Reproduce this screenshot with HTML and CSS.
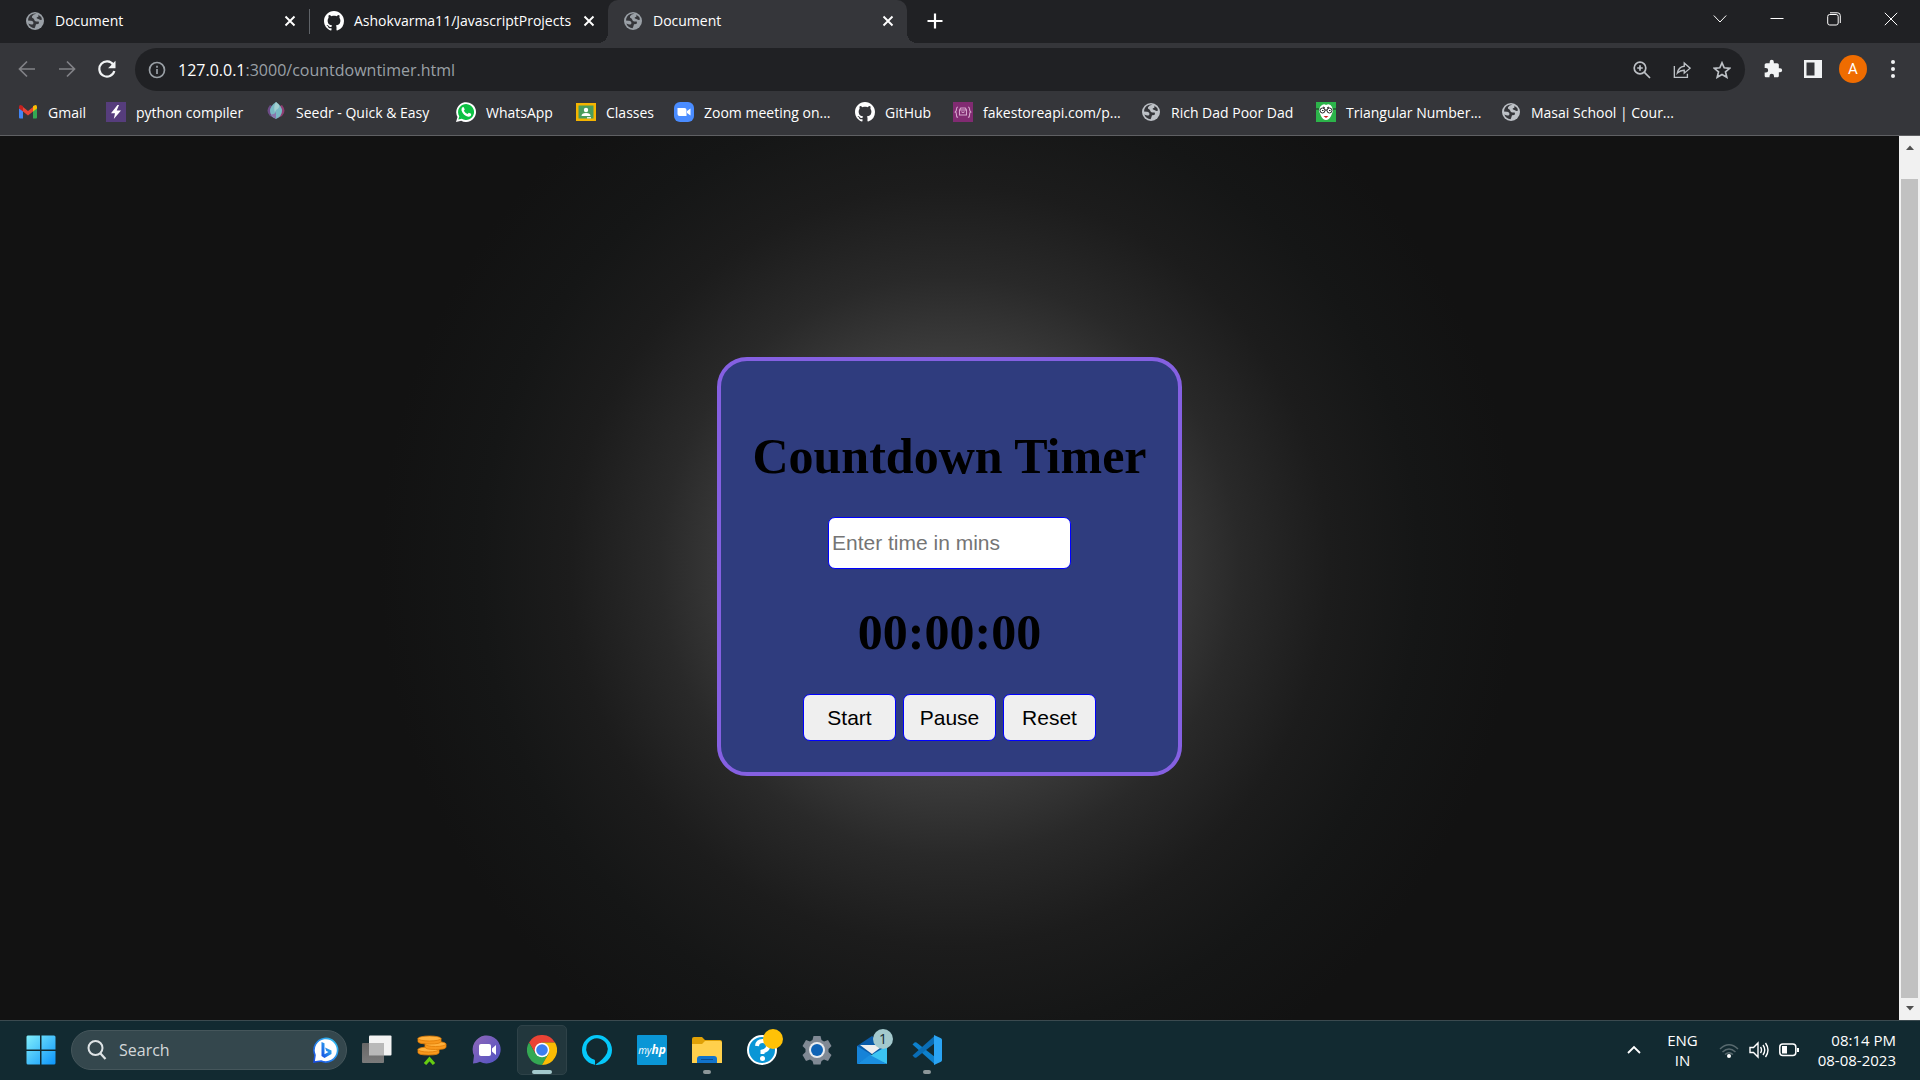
FILE: index.html
```html
<!DOCTYPE html>
<html lang="en">
<head>
<meta charset="utf-8">
<title>Document</title>
<link rel="stylesheet" href="styles.css">
</head>
<body>
<svg class="sprite" aria-hidden="true">
  <symbol id="globe" viewBox="0 0 20 20"><circle cx="10" cy="10" r="9" fill="currentColor"/><path fill="#35363a" d="M11.500 2.800q-3.500.2-4.500 2.400-.5 2 1.500 2.300l.8 1.300q.2 1.700 2 1.700h2.400q.8 1.800-.4 2.500l-2.300.3q-.6 2.500-1.500 4-4.500-.5-6.200-4.800 2.500 1.200 4.200.9 1.500-.6.800-2.200-1-1.600-2.800-1.400L3 9.500Q3.200 4.800 7.500 3q2-.8 4-.2zM13 3.500q3.200 1.500 4 5-1.500 1-3-.2-1.500-.3-2.500-1.300.2-1 1.800-1.200.6-1.300-.3-2.300z"/></symbol>
  <symbol id="github" viewBox="0 0 16 16"><path fill="#fff" d="M8 0C3.580 0 0 3.580 0 8c0 3.540 2.290 6.530 5.470 7.590.4.070.55-.17.55-.38 0-.19-.01-.82-.01-1.490-2.010.37-2.530-.49-2.690-.94-.09-.23-.48-.94-.82-1.130-.28-.15-.68-.52-.01-.53.63-.01 1.080.58 1.230.82.72 1.210 1.870.87 2.330.66.070-.52.28-.87.51-1.070-1.780-.2-3.640-.89-3.640-3.950 0-.87.31-1.590.82-2.150-.08-.2-.36-1.020.08-2.120 0 0 .67-.21 2.200.82.64-.18 1.320-.27 2-.27s1.360.09 2 .27c1.530-1.040 2.200-.82 2.200-.82.44 1.100.16 1.920.08 2.120.51.56.82 1.270.82 2.150 0 3.070-1.870 3.750-3.650 3.950.29.25.54.73.54 1.480 0 1.070-.01 1.930-.01 2.200 0 .21.15.46.55.38A8.010 8.010 0 0 0 16 8c0-4.420-3.580-8-8-8z"/></symbol>
  <symbol id="cross" viewBox="0 0 12 12"><path d="M1.500 1.500l9 9M10.500 1.500l-9 9" stroke="currentColor" stroke-width="1.900" fill="none"/></symbol>
</svg>

<header class="browser">
  <div class="tabstrip">
    <div class="tab">
      <svg class="favicon muted"><use href="#globe"/></svg><span class="tab-title">Document</span>
      <button class="tab-close" aria-label="Close tab"><svg><use href="#cross"/></svg></button>
    </div>
    <div class="tab tab-divided">
      <svg class="favicon"><use href="#github"/></svg><span class="tab-title">Ashokvarma11/JavascriptProjects</span>
      <button class="tab-close" aria-label="Close tab"><svg><use href="#cross"/></svg></button>
    </div>
    <div class="tab tab-active">
      <svg class="favicon muted"><use href="#globe"/></svg><span class="tab-title">Document</span>
      <button class="tab-close" aria-label="Close tab"><svg><use href="#cross"/></svg></button>
    </div>
    <button class="new-tab" aria-label="New tab"><svg viewBox="0 0 16 16"><path d="M8 .5v15M.5 8h15" stroke="#fff" stroke-width="2.200"/></svg></button>
    <div class="window-controls">
      <button aria-label="Search tabs"><svg viewBox="0 0 14 14"><path d="M.8 3.500L7 10l6.200-6.500" class="hair"/></svg></button>
      <button aria-label="Minimize"><svg viewBox="0 0 14 14"><path d="M.5 6.500h13" class="hair"/></svg></button>
      <button aria-label="Restore"><svg viewBox="0 0 14 14"><rect x=".7" y="2.500" width="10.500" height="10.500" rx="2" class="hair"/><path d="M3 .8h7.500q2.800 0 2.800 2.800V11" class="hair"/></svg></button>
      <button aria-label="Close"><svg viewBox="0 0 14 14"><path d="M.8.8l12.400 12.400M13.200.8L.8 13.200" class="hair"/></svg></button>
    </div>
  </div>

  <div class="toolbar">
    <button class="nav dim" aria-label="Back"><svg viewBox="0 0 18 18"><path d="M17 9H2M9 1.500L1.500 9 9 16.500" class="line"/></svg></button>
    <button class="nav dim" aria-label="Forward"><svg viewBox="0 0 18 18"><path d="M1 9h15M9 1.500L16.500 9 9 16.500" class="line"/></svg></button>
    <button class="nav" aria-label="Reload"><svg viewBox="0 0 18 18"><path d="M15.300 4.800A7.600 7.600 0 1 0 16.300 11" fill="none" stroke="#f1f3f4" stroke-width="2.200"/><path d="M17.500.8v7.400h-7.400z" fill="#f1f3f4"/></svg></button>
    <div class="omnibox">
      <svg class="info" viewBox="0 0 18 18"><circle cx="9" cy="9" r="7.500" class="line"/><path d="M9 8v5M9 4.800v2" class="line"/></svg>
      <label class="url" for="address"><span class="host">127.0.0.1</span>:3000/countdowntimer.html</label>
      <input id="address" class="address" type="text" aria-label="Address">
      <button aria-label="Zoom"><svg viewBox="0 0 18 18"><circle cx="7" cy="7" r="5.800" class="line"/><path d="M11.200 11.200l5.800 5.800M7 4.200v5.600M4.200 7h5.600" class="line"/></svg></button>
      <button aria-label="Share"><svg viewBox="0 0 20 18"><path d="M1.500 4.500v12.700h14.500v-4M12.500 1.200L19 7l-6.500 5.500V9.300Q8 9.200 4.800 12.500 6 5.500 12.500 4.800z" fill="none" stroke="currentColor" stroke-width="1.500"/></svg></button>
      <button aria-label="Bookmark"><svg viewBox="0 0 18 18"><path d="M9 1.800l2.200 5 5.500.5-4.200 3.600 1.300 5.400L9 13.500l-4.800 2.800 1.300-5.400L1.300 7.300l5.500-.5z" class="line"/></svg></button>
    </div>
    <button class="action" aria-label="Extensions"><svg viewBox="0 0 24 24"><path fill="#f1f3f4" d="M20.500 11H19V7c0-1.100-.9-2-2-2h-4V3.500a2.500 2.500 0 0 0-5 0V5H4c-1.100 0-2 .9-2 2v3.800h1.500a2.700 2.700 0 0 1 0 5.400H2V20c0 1.100.9 2 2 2h3.800v-1.500a2.700 2.700 0 0 1 5.400 0V22H17c1.100 0 2-.9 2-2v-4h1.500a2.500 2.500 0 0 0 0-5z"/></svg></button>
    <button class="action" aria-label="Side panel"><svg viewBox="0 0 20 20"><path fill="#f1f3f4" fill-rule="evenodd" d="M1 1h18v18H1zM3.500 3.500v13h8v-13z"/></svg></button>
    <button class="action" aria-label="Profile"><span class="avatar">A</span></button>
    <button class="action" aria-label="Menu"><svg viewBox="0 0 20 20"><g fill="#f1f3f4"><circle cx="10" cy="3" r="2"/><circle cx="10" cy="10" r="2"/><circle cx="10" cy="17" r="2"/></g></svg></button>
  </div>

  <nav class="bookmarks" aria-label="Bookmarks">
    <a href="#"><svg viewBox="0 0 20 20"><path fill="#4285f4" d="M1 6v9.500q0 1 1 1h3V8.500z"/><path fill="#34a853" d="M19 6v9.500q0 1-1 1h-3V8.500z"/><path fill="#ea4335" d="M5 5l5 4 5-4v4.500l-5 4-5-4z"/><path fill="#c5221f" d="M1 5q0-3 3-1.500L5 4.300v5.200L1 6.500z"/><path fill="#fbbc04" d="M19 5q0-3-3-1.500l-1 .8v5.200l4-3z"/></svg>Gmail</a>
    <a href="#"><svg viewBox="0 0 20 20"><path fill="#563d7c" d="M0 0h20v20H0z"/><path fill="#fff" d="M11.500 3L5 11.200h4L7.800 17 15 8.500h-4.300L13 3z"/></svg>python compiler</a>
    <a href="#"><svg viewBox="0 0 20 20"><path fill="#6c4b86" d="M4 3q-5 6 0 11 3 2 6 2V6z"/><path fill="#8f3d72" d="M16 3q5 6 0 11-3 2-6 2V6z"/><path fill="#79b9c4" d="M10 0Q4 4 4 9t6 8q6-3 6-8t-6-9z"/><path fill="#a2cfd0" d="M10 0Q7 5 9 11l1-3q4-2 3-5z"/><path fill="#8a77ae" d="M5 12q4 1 5-3v8q-4-2-5-5z"/></svg>Seedr - Quick &amp; Easy</a>
    <a href="#"><svg viewBox="0 0 20 20"><path fill="#fff" d="M0 20l1.500-5A9.900 9.900 0 1 1 5.200 18.700z"/><path fill="#0cc143" d="M2.300 17.600l1-3.300a8 8 0 1 1 2.500 2.500z"/><path fill="#fff" d="M6.200 5.500q1-1 1.700 0l.8 1.900q0 .5-.9 1.300 1.500 2.600 3.800 3.300l1.200-1.300 2.300 1.100q.5 3-2.800 3Q7.500 14 5.500 8.500q-.2-2 .7-3z"/></svg>WhatsApp</a>
    <a href="#"><svg viewBox="0 0 20 20"><path fill="#f4b400" d="M0 1h20v18H0z"/><path fill="#4a9c5c" d="M2.500 3.500h15v13h-15z"/><circle cx="10" cy="8" r="2.200" fill="#fff"/><path fill="#fff" d="M5.500 14q0-3 4.500-3t4.500 3z"/><path fill="#dcebdc" d="M11 15h4v1.500h-4z"/></svg>Classes</a>
    <a href="#"><svg viewBox="0 0 20 20"><rect width="20" height="20" rx="6" fill="#4a8cff"/><path fill="#fff" d="M3.500 6h7q2 0 2 2v6h-7q-2 0-2-2zM13 9l3.500-2.500v7L13 11z"/></svg>Zoom meeting on...</a>
    <a href="#"><svg><use href="#github"/></svg>GitHub</a>
    <a href="#"><svg viewBox="0 0 20 20"><path fill="#812b72" d="M0 0h20v20H0z"/><path fill="none" stroke="#d6a6cd" stroke-width="1.100" d="M5 5q-1.500 0-1.500 2T2.300 10q1.200.3 1.200 3T5 15M15 5q1.500 0 1.500 2t1.200 3q-1.200.3-1.200 3T15 15M6.500 8l1.200-2h4.600l1.200 2v5h-7zM6.500 8h7M8.500 9.500q1.500 2 3 0"/></svg>fakestoreapi.com/p...</a>
    <a href="#"><svg class="pale"><use href="#globe"/></svg>Rich Dad Poor Dad</a>
    <a href="#"><svg viewBox="0 0 20 20"><path fill="#2cb44a" d="M0 0h20v20H0z"/><path fill="#fff" d="M4 5q3-4 6-2 4-2 6 2l1 4-2 5q-2 4-5 4t-5-4L3 9z"/><path d="M0 7h3M17 7h3M9 8h2" stroke="#222"/><circle cx="6.500" cy="8.500" r="2.500" fill="#fff" stroke="#222"/><circle cx="13.500" cy="8.500" r="2.500" fill="#fff" stroke="#222"/><path d="M6 8.500h1.500M13 8.500h1.500M7 5l2 1M11 6l2-1" stroke="#222"/><path fill="#c22" d="M7.500 14h5l-2.500 2z"/></svg>Triangular Number...</a>
    <a href="#"><svg class="pale"><use href="#globe"/></svg>Masai School | Cour...</a>
  </nav>
</header>

<div class="viewport">
  <main class="page">
    <section class="timer">
      <h1>Countdown Timer</h1>
      <input class="minutes" type="text" placeholder="Enter time in mins" aria-label="Time in minutes">
      <p class="time">00:00:00</p>
      <div class="controls">
        <button>Start</button>
        <button>Pause</button>
        <button>Reset</button>
      </div>
    </section>
  </main>
  <div class="scrollbar" aria-hidden="true">
    <svg viewBox="0 0 10 6"><path d="M5 .5L10 6H0z" fill="#505050"/></svg>
    <div class="thumb"></div>
    <svg viewBox="0 0 10 6"><path d="M5 5.500L10 0H0z" fill="#505050"/></svg>
  </div>
</div>

<footer class="taskbar">
  <button class="task" aria-label="Start"><svg viewBox="0 0 30 30"><defs><linearGradient id="win" x1="0" y1="0" x2="30" y2="30" gradientUnits="userSpaceOnUse"><stop offset="0" stop-color="#83f0fb"/><stop offset="1" stop-color="#0a93fb"/></linearGradient></defs><path fill="url(#win)" d="M1.500.5H14v14H.5v-13zM15.500.5H28q1.500 0 1.500 1.500v12.500h-14zM.5 16H14v13.500H2Q.5 29.500.5 28zM15.500 16h14v12q0 1.500-1.500 1.500H15.500z"/></svg></button>
  <label class="search">
    <svg class="lens" viewBox="0 0 20 20"><circle cx="8.500" cy="8" r="7" fill="none" stroke="#dfe4e6" stroke-width="2"/><path d="M13.500 13.500l5 5.500" stroke="#dfe4e6" stroke-width="2.200"/></svg>
    <input type="text" placeholder="Search" aria-label="Search">
    <svg class="bing" viewBox="0 0 26 26"><defs><linearGradient id="bg" x1="0" y1="1" x2="1" y2="0"><stop offset="0" stop-color="#174ae4"/><stop offset="1" stop-color="#35c6f0"/></linearGradient></defs><path d="M1 25l1-7A11.800 11.800 0 1 1 8 24z" fill="#fff" stroke="url(#bg)" stroke-width="1.600"/><path fill="url(#bg)" d="M8.500 5l3 1.300v11l4-2.300-2.200-1-1.300-3.400 6.500 2.800v3.700L11.500 21l-3-2z"/></svg>
  </label>
  <button class="task" aria-label="Task view"><svg viewBox="0 0 30 30"><defs><linearGradient id="tv" x1="0" y1="0" x2="0" y2="1"><stop offset="0" stop-color="#666"/><stop offset="1" stop-color="#7b7b7b"/></linearGradient></defs><rect x="7" y=".5" width="22.500" height="20" rx="1" fill="#f3f3f3"/><rect x="0" y="8" width="22" height="20" rx="1" fill="url(#tv)"/><path d="M7 8h15v12.500H7z" fill="#b9b9b9"/></svg></button>
  <button class="task" aria-label="Coins"><svg viewBox="0 0 30 30"><g stroke="#e07c06" stroke-width=".8"><path fill="#f8981d" d="M1 14.500v3q0 2.500 10.500 2.500T22 17.500v-3z"/><ellipse cx="11.500" cy="14.500" rx="10.500" ry="2.500" fill="#ffb13d"/><path fill="#f8981d" d="M8 9v3q0 2.500 10.500 2.500T29 12V9z"/><ellipse cx="18.500" cy="9" rx="10.500" ry="2.500" fill="#ffb13d"/><path fill="#f8981d" d="M1 3.500v3Q1 9 12.500 9T24 6.500v-3z"/><ellipse cx="12.500" cy="3.500" rx="11.500" ry="2.500" fill="#ffb13d"/></g><path d="M8 29l4.500-5 4.500 5" fill="none" stroke="#6c1" stroke-width="3.200"/></svg></button>
  <button class="task" aria-label="Chat"><svg viewBox="0 0 30 30"><defs><linearGradient id="ch" x1="0" y1="0" x2="1" y2="1"><stop offset="0" stop-color="#9067b8"/><stop offset="1" stop-color="#4f52c4"/></linearGradient></defs><path fill="url(#ch)" d="M1 28.500l1-8A14 14 0 1 1 8 26.800q-3 1.700-7 1.700z"/><rect x="7" y="9" width="12" height="12" rx="2" fill="#fff"/><path fill="#fff" d="M20 13.500l4-3.500v10l-4-3.500z"/></svg></button>
  <button class="task focused" aria-label="Chrome"><svg viewBox="0 0 30 30"><path fill="#ea4335" d="M2 7.500A15 15 0 0 1 28 7.500H15L8.500 18.800z"/><path fill="#34a853" d="M2 7.500A15 15 0 0 0 15 30l6.500-11.200H8.500z"/><path fill="#fbbc04" d="M28 7.500A15 15 0 0 1 15 30l6.500-11.200Q23 11 15 7.500z"/><circle cx="15" cy="15" r="7.300" fill="#fff"/><circle cx="15" cy="15" r="5.800" fill="#3c7ef0"/></svg></button>
  <button class="task" aria-label="Alexa"><svg viewBox="0 0 30 30"><path fill="#05c8fa" fill-rule="evenodd" d="M15 0a15 15 0 1 0 0 30 15 15 0 0 0 0-30zM13 30v-4.300q0-.8-1-1.200A10.800 10.800 0 1 1 25 18q-3 6-12 12z"/></svg></button>
  <button class="task" aria-label="myHP"><span class="myhp">my<b>hp</b></span></button>
  <button class="task running" aria-label="File Explorer"><svg viewBox="0 0 30 30"><path fill="#e0a106" d="M0 4q0-2 2-2h8l3 3h15q2 0 2 2v8H0z"/><path fill="#ffd04c" d="M0 9h10l3-3h15q2 0 2 2v20H0z"/><path fill="#1173cb" d="M5 28v-4q0-3 3-3h14q3 0 3 3v4z"/><path d="M9 24.500h12" stroke="#0b4d91"/></svg></button>
  <button class="task notified" aria-label="Help"><svg viewBox="0 0 36 36"><circle cx="15" cy="21" r="14" fill="#0a96d6" stroke="#fff" stroke-width="2"/><path d="M10 17q.5-5 5.500-5t5.500 4.500-5.500 6V25" fill="none" stroke="#fff" stroke-width="4"/><circle cx="15.500" cy="29.500" r="2.500" fill="#fff"/><circle cx="26" cy="10" r="10" fill="#ffc107"/></svg></button>
  <button class="task" aria-label="Settings"><svg viewBox="0 0 30 30"><path fill="#808994" d="M11.500 1h7l1 4 2.500 1.500 4-1.500 3.500 6-3 3v3l3 3-3.500 6-4-1.500-2.500 1.500-1 3.500h-7l-1-3.500L8 24.500 4 26 .5 20l3-3v-3l-3-3L4 5l4 1.500L10.500 5z"/><circle cx="15" cy="15" r="8" fill="#e9ecef"/><circle cx="15" cy="15" r="6" fill="#0f63b5"/></svg></button>
  <button class="task" aria-label="Mail"><svg viewBox="0 0 30 30"><path fill="#0a5ba8" d="M0 11L15 1l15 10v8H0z"/><path fill="#eee" d="M3 10h24l-12 9z"/><path fill="#1683d8" d="M0 11l15 9L0 29z"/><path fill="#3bc4f2" d="M30 11L11 22l19 7z"/><path fill="#1b8fe0" d="M0 29l13-9 17 9z"/></svg><span class="badge">1</span></button>
  <button class="task running" aria-label="Visual Studio Code"><svg viewBox="0 0 30 30"><path d="M.5 9.500l2-2q1-.6 2 0L23 22v7.500z" fill="#0d80cc"/><path d="M.5 20.500l2 2q1 .6 2 0L23 8V.5z" fill="#0a6db5"/><path d="M22 0l7 3.300q1 .5 1 1.700v20q0 1.200-1 1.700L22 30z" fill="#2aa4f4"/></svg></button>

  <div class="tray">
    <button class="overflow" aria-label="Show hidden icons"><svg viewBox="0 0 14 14"><path d="M1 10l6-6 6 6" fill="none" stroke="#fff" stroke-width="1.800"/></svg></button>
    <button class="language">ENG<br>IN</button>
    <button class="status" aria-label="Quick settings">
      <svg viewBox="0 0 20 20"><g fill="none" stroke="#58696e" stroke-width="1.500"><path d="M1 9q9-8.500 18 0M3.500 12q6.500-6 13 0M6 14.500q4-3.500 8 0"/></g><circle cx="10" cy="16" r="2" fill="#fff"/></svg>
      <svg viewBox="0 0 20 20"><g fill="none" stroke="#fff" stroke-width="1.400"><path d="M1 7.500h3.500L9 3v14l-4.500-4.500H1zM11.500 7q2 3 0 6M14 5q3.500 5 0 10M16.500 3q5 7 0 14"/></g></svg>
      <svg viewBox="0 0 20 20"><rect x=".8" y="4" width="16" height="11.500" rx="3" fill="none" stroke="#fff" stroke-width="1.500"/><path d="M3 6h5v7.500H3zM18 8h2v4h-2z" fill="#fff"/></svg>
    </button>
    <button class="clock">08:14 PM<br>08-08-2023</button>
  </div>
</footer>
</body>
</html>
```
FILE: styles.css
```css
* { box-sizing: border-box; }

body {
  margin: 0;
  min-height: 100vh;
  display: flex;
  flex-direction: column;
  background: #121212;
  font-family: "Open Sans", "Noto Sans", sans-serif;
  font-size: 14px;
  color: #fff;
}

button {
  border: 0;
  padding: 0;
  background: none;
  color: inherit;
  font: inherit;
}

svg { display: block; flex: none; }
.sprite { display: none; }
.hair { fill: none; stroke: #fff; stroke-width: 1; }
.line { fill: none; stroke: currentColor; stroke-width: 1.7; }

/* Browser chrome */
.browser {
  background: #35363a;
  border-bottom: 1px solid #5f6063;
}

.tabstrip {
  display: flex;
  height: 43px;
  padding-left: 10px;
  background: #202124;
}

.tab {
  position: relative;
  display: flex;
  align-items: center;
  width: 299px;
  padding: 0 13px 2px 15px;
}

.tab-divided::before {
  content: "";
  position: absolute;
  left: 0;
  top: 9px;
  width: 1px;
  height: 25px;
  background: #5f6368;
}

.tab-active {
  background: #35363a;
  border-radius: 10px 10px 0 0;
}

.tab-active::before,
.tab-active::after {
  content: "";
  position: absolute;
  bottom: 0;
  width: 10px;
  height: 10px;
}

.tab-active::before {
  right: 100%;
  background: radial-gradient(circle at 0 0, transparent 10px, #35363a 10px);
}

.tab-active::after {
  left: 100%;
  background: radial-gradient(circle at 100% 0, transparent 10px, #35363a 10px);
}

.favicon { width: 20px; height: 20px; }
.muted { color: #9aa0a6; }
.pale { color: #bdc1c6; }

.tab-title {
  flex: 1;
  padding-left: 10px;
  white-space: nowrap;
}

.tab-close { width: 12px; }
.tab-close svg { width: 12px; height: 12px; }
.new-tab { margin-left: 20px; width: 16px; padding-bottom: 1px; }
.new-tab svg { width: 16px; height: 16px; }

.window-controls {
  display: flex;
  margin-left: auto;
  height: 37px;
  padding-right: 1px;
}

.window-controls button {
  display: grid;
  place-items: center;
  width: 57px;
}

.window-controls svg { width: 14px; height: 14px; }

.toolbar {
  display: flex;
  align-items: center;
  padding: 5px 7px 0 7px;
}

.nav {
  display: grid;
  place-items: center;
  width: 40px;
  padding-bottom: 2px;
}

.nav svg { width: 18px; height: 18px; }
.dim { color: #818286; }

.omnibox {
  display: flex;
  align-items: center;
  flex: 1;
  height: 43px;
  margin: 0 8px;
  padding: 0 3px 0 13px;
  border-radius: 22px;
  background: #202124;
  color: #bdc1c6;
}

.info { width: 18px; height: 18px; color: #9aa0a6; }
.url { padding-left: 12px; font-size: 16px; color: #9aa0a6; }
.host { color: #fff; }

.address {
  flex: 1;
  min-width: 0;
  border: 0;
  background: none;
  color: inherit;
}

.omnibox button {
  display: grid;
  place-items: center;
  width: 40px;
}

.omnibox button svg { width: 18px; height: 18px; }

.action {
  display: grid;
  place-items: center;
  width: 40px;
  padding-bottom: 2px;
}

.action svg { width: 20px; height: 20px; }

.avatar {
  width: 28px;
  border-radius: 50%;
  background: #ef6c00;
  font: 15px/28px Roboto, sans-serif;
}

.bookmarks {
  display: grid;
  grid-template-columns: 88px 160px 190px 120px 98px 181px 98px 188px 175px 185px auto;
  align-items: center;
  height: 44px;
  padding: 0 0 2px 18px;
}

.bookmarks a {
  display: flex;
  align-items: center;
  gap: 10px;
  color: #fff;
  text-decoration: none;
  white-space: nowrap;
}

.bookmarks svg { width: 20px; height: 20px; }

/* Page area */
.viewport { display: flex; flex: 1; }

.page {
  display: grid;
  place-items: center;
  flex: 1;
  padding-bottom: 23px;
  background: radial-gradient(circle at 50% calc(50% - 12px),
    #505050 0, #3c3c3c 209px, #292929 290px, #1c1c1c 380px, #151616 470px, #121212 570px);
}

.timer {
  display: flex;
  flex-direction: column;
  align-items: center;
  padding: 34px 31px 31px;
  border: 4px solid #8560e2;
  border-radius: 30px;
  background: #2f3c7e;
  color: #000;
}

.timer h1,
.time {
  margin: 32px 0;
  font: bold 50px/58px "Liberation Serif", serif;
}

.time { margin: 34px 0 33px; }

.minutes {
  width: 243px;
  height: 52px;
  padding: 0 3px;
  border: 1px solid #00f;
  border-radius: 7px;
  background: #fff;
  font: 21px "Liberation Sans", sans-serif;
}

.minutes::placeholder { color: #757575; }

.controls { display: flex; gap: 7px; }

.controls button {
  width: 93px;
  height: 47px;
  border: 1px solid #00f;
  border-radius: 7px;
  background: #efefef;
  font: 21px "Liberation Sans", sans-serif;
}

.scrollbar {
  display: flex;
  flex-direction: column;
  align-items: center;
  width: 21px;
  padding: 9px 2px;
  background: #f1f1f1;
}

.scrollbar svg { width: 8px; height: 5px; }

.thumb {
  flex: 1;
  width: 100%;
  margin: 29px 0 8px;
  background: #c1c1c1;
}

/* Taskbar */
.taskbar {
  display: flex;
  align-items: center;
  gap: 5px;
  height: 60px;
  padding: 0 24px 1px 16px;
  border-top: 1px solid #3b4a4f;
  background: #122a31;
}

.task {
  position: relative;
  display: grid;
  place-items: center;
  width: 50px;
  height: 50px;
  border-radius: 5px;
}

.task svg { width: 30px; height: 30px; }
.notified { padding: 0 0 6px 6px; }
.notified svg { width: 36px; height: 36px; }

.focused {
  background: #22373d;
  border: 1px solid #2e4248;
}

.running::after,
.focused::after {
  content: "";
  position: absolute;
  bottom: 1px;
  left: 50%;
  width: 8px;
  height: 4px;
  margin-left: -4px;
  border-radius: 2px;
  background: #8c9799;
}

.focused::after {
  bottom: 0;
  width: 20px;
  margin-left: -10px;
  background: #a3c9cd;
}

.myhp {
  width: 30px;
  border-radius: 1px;
  background: #0a96d6;
  font: italic 10px/30px "Open Sans", sans-serif;
}

.myhp b { font-size: 12px; }

.badge {
  position: absolute;
  top: 4px;
  right: 4px;
  width: 20px;
  border-radius: 50%;
  background: #a3c9cd;
  color: #122a31;
  line-height: 20px;
}

.search {
  display: flex;
  align-items: center;
  width: 276px;
  height: 40px;
  padding: 0 7px 0 15px;
  border: 1px solid #45565b;
  border-radius: 20px;
  background: #34474d;
}

.search input {
  flex: 1;
  min-width: 0;
  padding: 0 12px;
  border: 0;
  background: none;
  color: #fff;
  font: 16px "Open Sans", sans-serif;
}

.search input::placeholder { color: #d3d8da; }
.lens { width: 20px; height: 20px; }
.bing { width: 26px; height: 26px; }

.tray {
  display: flex;
  align-items: center;
  margin-left: auto;
  font-size: 15px;
  line-height: 20px;
}

.overflow svg { width: 14px; height: 14px; }
.language { margin-left: 26px; }
.status { display: flex; gap: 10px; margin: 0 19px 0 21px; }
.status svg { width: 20px; height: 20px; }
.clock { text-align: right; }
```
